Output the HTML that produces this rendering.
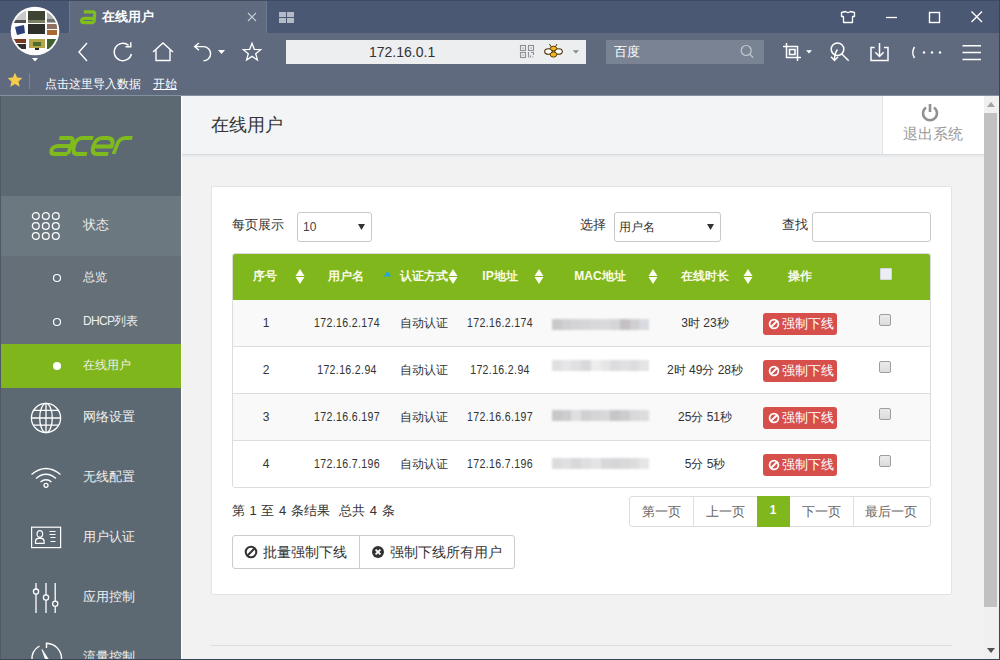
<!DOCTYPE html>
<html><head><meta charset="utf-8">
<style>
*{margin:0;padding:0;box-sizing:border-box}
html,body{width:1000px;height:660px;overflow:hidden;background:#f1f1f1;font-family:"Liberation Sans",sans-serif}
.a{position:absolute}
#tabbar{left:0;top:0;width:1000px;height:33px;background:#4b5873}
#tabbar .topline{left:0;top:0;width:1000px;height:1px;background:#3f4a60}
#tab{left:69px;top:1px;width:198px;height:32px;background:#5f6a7e;border-left:1px solid #6f7a8e;border-right:1px solid #6f7a8e}
#toolbar{left:0;top:33px;width:1000px;height:63px;background:#5f6a7e}
#addr{left:286px;top:40px;width:300px;height:24px;background:#eceef0}
#search{left:606px;top:40px;width:158px;height:24px;background:#7a8393}
.t{white-space:nowrap;line-height:1}
.c{transform:translateX(-50%)}
#side{left:0;top:96px;width:181px;height:564px;background:#5d6972}
#content{left:181px;top:96px;width:803px;height:564px;background:#f2f2f2}
#hdr{left:181px;top:96px;width:803px;height:59px;background:#f3f4f6;border-bottom:1px solid #dadbdd;box-shadow:0 1px 0 #e8e9eb,0 2px 0 #eaebed,0 3px 0 #eff0f1}
#logout{left:882px;top:96px;width:102px;height:58px;background:#fff;border-left:1px solid #e2e3e5}
#panel{left:211px;top:186px;width:741px;height:409px;background:#fff;border:1px solid #e3e3e3;border-radius:2px}
#scroll{left:984px;top:96px;width:15px;height:563px;background:#f0f0f0}
#thumb{left:984px;top:113px;width:13px;height:494px;background:#c1c1c1}
#rborder{left:999px;top:0;width:1px;height:660px;background:#3b4457}
#bborder{left:0;top:659px;width:1000px;height:1px;background:#3b4457}
</style></head><body>
<div class="a" id="tabbar"><div class="a topline"></div></div>
<div class="a" id="tab"></div>
<div class="a" id="toolbar"></div>
<div class="a" id="addr"></div>
<div class="a" id="search"></div>

<!-- avatar -->
<svg class="a" style="left:9px;top:6px" width="54" height="60" viewBox="0 0 54 60">
<circle cx="26" cy="25" r="24.3" fill="#fdfdfd"/>
<clipPath id="cc"><circle cx="26" cy="25" r="22.5"/></clipPath>
<g clip-path="url(#cc)">
<rect x="5" y="5" width="12" height="12" fill="#c9c9c9"/><rect x="5" y="14" width="12" height="3" fill="#505050"/>
<rect x="19" y="5" width="17" height="12" fill="#3d4433"/><rect x="19" y="14" width="17" height="3" fill="#7a8060"/>
<rect x="38" y="5" width="10" height="12" fill="#b0b0b0"/><rect x="38" y="13" width="10" height="3" fill="#707070"/>
<path d="M6 21 L15 19 L16 27 L8 29 Z" fill="#2c3f78"/>
<rect x="19" y="18" width="17" height="10" fill="#2e2e2a"/>
<rect x="38" y="18" width="10" height="5" fill="#8c7060"/><rect x="38" y="24" width="10" height="5" fill="#a86a30"/>
<rect x="5" y="33" width="12" height="4" fill="#7a3a20"/><rect x="8" y="38" width="9" height="5" fill="#303030"/>
<rect x="20" y="33" width="16" height="9" fill="#b4a548"/><rect x="24" y="36" width="8" height="4" fill="#4d6a2f"/><rect x="26" y="42" width="4" height="2" fill="#222"/>
<rect x="38" y="33" width="10" height="10" fill="#41602f"/>
</g>
<path d="M23 52 L29 52 L26 55.5 Z" fill="#fff"/>
</svg>
<!-- tab icon & title -->
<svg class="a" style="left:78px;top:8px" width="20" height="18" viewBox="0 0 20 18"><g fill="none" stroke="#80c01c" stroke-width="3.1"><path d="M5.8 3.9 H14.6 Q17 3.9 16.7 6.6 L15.9 14.6"/><path d="M16.2 10.4 H7.2 Q3.7 10.4 3.5 12.8 Q3.4 14.6 6 14.6 H15.9"/></g></svg>
<div class="a t" style="left:102px;top:10px;font-size:13px;font-weight:bold;color:#fff">在线用户</div>
<svg class="a" style="left:247px;top:12px" width="10" height="10" viewBox="0 0 10 10"><path d="M1 1L9 9M9 1L1 9" stroke="#c5cad3" stroke-width="1.2"/></svg>
<svg class="a" style="left:279px;top:12px" width="16" height="12" viewBox="0 0 16 12"><rect x="0" y="0" width="7" height="5" fill="#b4bbc6"/><rect x="8" y="0" width="7" height="5" fill="#b4bbc6"/><rect x="0" y="6" width="7" height="5" fill="#b4bbc6"/><rect x="8" y="6" width="7" height="5" fill="#b4bbc6"/></svg>
<!-- window controls -->
<svg class="a" style="left:836px;top:6px" width="160" height="24" viewBox="836 6 160 24" fill="none" stroke="#fff" stroke-width="1.3">
<path d="M845.5 11.5 Q848 13.5 850.5 11.5 L854.5 12.5 L854.5 16.5 L852.5 16.5 L852.5 22.5 L843.5 22.5 L843.5 16.5 L841.5 16.5 L841.5 12.5 Z" stroke-linejoin="round"/>
<path d="M886 17.5 H897"/>
<rect x="929.5" y="12.5" width="10" height="10" stroke-width="1.4"/>
<path d="M971.5 11.5 L982 22 M982 11.5 L971.5 22" stroke-width="1.4"/>
</svg>
<!-- nav icons -->
<svg class="a" style="left:74px;top:40px" width="200" height="26" viewBox="0 0 200 26">
<path d="M13 3 L5 12 L13 21" fill="none" stroke="#fff" stroke-width="1.4"/>
<path d="M54.6 5.4 A8.7 8.7 0 1 0 57.4 14" fill="none" stroke="#fff" stroke-width="1.4"/>
<path d="M51.5 6.8 H56.8 V2.2" fill="none" stroke="#fff" stroke-width="1.4"/>
<path d="M79 12 L89 3 L99 12 M82 10 L82 20.5 L96 20.5 L96 10" fill="none" stroke="#fff" stroke-width="1.4"/>
<path d="M125 3 L120.6 6.6 L125 10.2 M120.8 6.6 H129.5 A7 7 0 0 1 129.5 20.8" fill="none" stroke="#fff" stroke-width="1.4"/>
<path d="M144 10 L151 10 L147.5 14 Z" fill="#fff"/>
<path d="M178.00 3.30 L180.29 9.34 L186.75 9.66 L181.71 13.71 L183.41 19.94 L178.00 16.40 L172.59 19.94 L174.29 13.71 L169.25 9.66 L175.71 9.34 Z" fill="none" stroke="#fff" stroke-width="1.3" stroke-linejoin="miter"/>
</svg>
<!-- address -->
<div class="a t" style="left:369px;top:45px;font-size:14px;color:#333">172.16.0.1</div>
<svg class="a" style="left:510px;top:38px" width="80" height="28" viewBox="510 38 80 28">
<g fill="none" stroke="#8d9197" stroke-width="1.1">
<rect x="520.5" y="45.5" width="5" height="5"/><rect x="528.5" y="45.5" width="5" height="5"/><rect x="520.5" y="52.5" width="5" height="5"/>
<path d="M528.5 52 V57.5 M531 52.5 H533.5 V55 M530.5 55.5 V57.5 M532.5 57 H533.5"/>
</g>
<g fill="#8d9197"><rect x="522.5" y="47.5" width="1.2" height="1.2"/><rect x="530.5" y="47.5" width="1.2" height="1.2"/><rect x="522.5" y="54.5" width="1.2" height="1.2"/></g>
<path d="M549.5 44 L551.5 47.5 M557 44 L555 47.5" stroke="#5a3a00" stroke-width="1"/>
<ellipse cx="548.5" cy="51.5" rx="3.8" ry="2.8" fill="#fff" stroke="#4a3000" stroke-width="1.1"/>
<ellipse cx="558.5" cy="51.5" rx="3.8" ry="2.8" fill="#fff" stroke="#4a3000" stroke-width="1.1"/>
<ellipse cx="553.5" cy="48.5" rx="3.2" ry="2.3" fill="#f5b51c" stroke="#4a3000" stroke-width="0.9"/>
<ellipse cx="553.5" cy="54.5" rx="3.3" ry="2.6" fill="#f5b51c" stroke="#4a3000" stroke-width="0.9"/>
<path d="M572.8 50.2 H579 L575.9 53.4 Z" fill="#888"/>
</svg>
<!-- search -->
<div class="a t" style="left:614px;top:45px;font-size:13px;color:#fff">百度</div>
<svg class="a" style="left:739px;top:43px" width="17" height="17" viewBox="0 0 17 17"><circle cx="7.2" cy="7.5" r="5" fill="none" stroke="#c3c8d0" stroke-width="1.2"/><path d="M10.8 11.1L14 14.5" stroke="#c3c8d0" stroke-width="1.3"/></svg>
<!-- right tools -->
<svg class="a" style="left:770px;top:36px" width="220" height="30" viewBox="770 36 220 30" fill="none" stroke="#fff" stroke-width="1.5">
<path d="M783 46.5 H797.5 V61 M786.5 43 V57.5 H801"/>
<rect x="789.5" y="49.5" width="5.5" height="5" stroke-width="1.6"/>
<path d="M806 50.3 H812 L809 53.5 Z" fill="#fff" stroke="none"/>
<circle cx="837.5" cy="49.2" r="6.3"/>
<path d="M841.8 54 L848.7 60.7"/>
<path d="M837.5 49.5 Q834.5 53 834.5 60"/>
<path d="M831 56.8 L834.5 60.5 L838 56.8"/>
<path d="M874.6 47.4 H871 V60.4 H888 V47.4 H884"/>
<path d="M879.5 43 V56.5 M875.3 52.3 L879.5 56.5 L883.7 52.3"/>
<path d="M914.5 47 Q911 52.5 914.5 58"/>
<circle cx="924" cy="52.5" r="1.2" fill="#fff" stroke="none"/><circle cx="932" cy="52.5" r="1.2" fill="#fff" stroke="none"/><circle cx="940" cy="52.5" r="1.2" fill="#fff" stroke="none"/>
<path d="M962.5 45.8 H981 M962.5 52.6 H981 M962.5 59.5 H981"/>
</svg>
<!-- bookmarks -->
<svg class="a" style="left:7px;top:72px" width="16" height="16" viewBox="0 0 16 16"><path d="M8 0.8 L10.2 5.6 L15.4 6 L11.5 9.5 L12.7 14.8 L8 12 L3.3 14.8 L4.5 9.5 L0.6 6 L5.8 5.6 Z" fill="#f6ca4a"/></svg>
<div class="a" style="left:29px;top:73px;width:1px;height:16px;background:#7c8698"></div>
<div class="a t" style="left:45px;top:78px;font-size:12px;color:#fff">点击这里导入数据</div>
<div class="a t" style="left:153px;top:78px;font-size:12px;color:#fff;text-decoration:underline">开始</div>
<div class="a" style="left:0;top:95px;width:1000px;height:1px;background:#8590a0"></div>


<div class="a" id="side"></div>
<div class="a" style="left:0;top:96px;width:1px;height:564px;background:#4f5a66"></div>
<!-- acer logo -->
<svg class="a" style="left:49px;top:134px" width="85" height="24" viewBox="0 0 88 24" preserveAspectRatio="none">
<g transform="translate(2,2) translate(0,10) skewX(-12) translate(0,-10)" fill="none" stroke="#80bb1d" stroke-width="4" stroke-linecap="butt" stroke-linejoin="round">
<path d="M7 2 H18 Q22 2 21.3 6 L19.3 18"/>
<path d="M19.5 10 H8 Q1.5 10 1.5 14.5 Q1.5 18 6 18 H19"/>
<path d="M42 2 H31 Q25 2 24 9 Q23 18 29 18 H39"/>
<path d="M45.5 10.5 H63 Q64.5 2 56 2 H52 Q45 2 44 9.5 Q43 18 49.5 18 H61"/>
<path d="M66.5 18 L68.3 8 Q69.3 2 76 2 H82.5"/>
</g></svg>
<div class="a" style="left:1px;top:196px;width:180px;height:60px;background:#6c787f"></div>
<div class="a" style="left:1px;top:256px;width:180px;height:88px;background:#646f77"></div>
<div class="a" style="left:1px;top:344px;width:180px;height:44px;background:#7fb61b"></div>
<svg class="a" style="left:30px;top:210px" width="32" height="32" viewBox="0 0 32 32" fill="none" stroke="#fff" stroke-width="1.3"><circle cx="5.8" cy="6" r="3.4"/><circle cx="15.8" cy="6" r="3.4"/><circle cx="25.8" cy="6" r="3.4"/><circle cx="5.8" cy="16" r="3.4"/><circle cx="15.8" cy="16" r="3.4"/><circle cx="25.8" cy="16" r="3.4"/><circle cx="5.8" cy="26" r="3.4"/><circle cx="15.8" cy="26" r="3.4"/><circle cx="25.8" cy="26" r="3.4"/></svg>
<div class="a t" style="left:83px;top:218px;font-size:13px;color:#eef0f1">状态</div>
<svg class="a" style="left:52px;top:273px" width="10" height="10"><circle cx="5" cy="5" r="3.5" fill="none" stroke="#fff" stroke-width="1.2"/></svg>
<div class="a t" style="left:83px;top:271px;font-size:12px;color:#eef0f1">总览</div>
<svg class="a" style="left:52px;top:317px" width="10" height="10"><circle cx="5" cy="5" r="3.5" fill="none" stroke="#fff" stroke-width="1.2"/></svg>
<div class="a t" style="left:83px;top:315px;font-size:12px;color:#eef0f1"><span style="letter-spacing:-.7px">DHCP</span>列表</div>
<svg class="a" style="left:52px;top:361px" width="10" height="10"><circle cx="5" cy="5" r="4" fill="#fff"/></svg>
<div class="a t" style="left:83px;top:359px;font-size:12px;color:#eef0f1">在线用户</div>
<!-- globe -->
<svg class="a" style="left:29px;top:401px" width="34" height="34" viewBox="0 0 34 34" fill="none" stroke="#fff" stroke-width="1.3">
<circle cx="17" cy="17" r="14.6"/><ellipse cx="17" cy="17" rx="6.3" ry="14.6"/><path d="M17 2.4v29.2M2.4 17h29.2M4.6 9.3h24.8M4.6 24.2h24.8"/></svg>
<div class="a t" style="left:83px;top:410px;font-size:13px;color:#eef0f1">网络设置</div>
<!-- wifi -->
<svg class="a" style="left:29px;top:466px" width="34" height="24" viewBox="0 0 34 24" fill="none" stroke="#fff" stroke-width="1.3">
<path d="M2.5 8.5 Q17 -3.5 31.5 8.5"/><path d="M7 12.5 Q17 4 27 12.5"/><path d="M11.5 16 Q17 11.5 22.5 16"/><circle cx="17" cy="19.3" r="2"/></svg>
<div class="a t" style="left:83px;top:470px;font-size:13px;color:#eef0f1">无线配置</div>
<!-- user card -->
<svg class="a" style="left:30px;top:526px" width="32" height="24" viewBox="0 0 32 24" fill="none" stroke="#fff" stroke-width="1.2">
<rect x="1.6" y="1.2" width="29" height="20.4"/><ellipse cx="9.8" cy="8" rx="2.8" ry="3.4"/><path d="M5.5 17.3 V15.3 Q5.5 12.6 8.3 12.4 H11.3 Q14.1 12.6 14.1 15.3 V17.3 Z"/><path d="M19.5 5.5h6M19.5 8.5h6M20.5 11.5h5M20.5 15.5h5"/></svg>
<div class="a t" style="left:83px;top:530px;font-size:13px;color:#eef0f1">用户认证</div>
<!-- sliders -->
<svg class="a" style="left:31px;top:580px" width="30" height="36" viewBox="0 0 30 36" fill="none" stroke="#fff" stroke-width="1.3">
<path d="M5 3v30M15 3v30M24.2 3v30"/><circle cx="5" cy="11.6" r="2.6" fill="#5d6972"/><circle cx="15" cy="17.5" r="2.6" fill="#5d6972"/><circle cx="24.2" cy="23.7" r="2.6" fill="#5d6972"/></svg>
<div class="a t" style="left:83px;top:590px;font-size:13px;color:#eef0f1">应用控制</div>
<!-- gauge -->
<svg class="a" style="left:29px;top:641px" width="34" height="20" viewBox="0 0 34 20" fill="none" stroke="#fff" stroke-width="1.4">
<path d="M3 19 A15 15 0 0 1 10.5 5"/><path d="M17.5 7 V2.2 A15.5 15.5 0 0 1 32.5 19"/><path d="M13 8.5 L19.5 18.5 L16.5 18.5 Z" fill="#fff" stroke-width="0.8"/></svg>
<div class="a t" style="left:83px;top:650px;font-size:13px;color:#eef0f1">流量控制</div>

<div class="a" id="content"></div>
<div class="a" id="hdr"></div>
<div class="a" id="logout"></div>

<div class="a" id="panel"></div>
<div class="a" style="left:181px;top:96px;width:1px;height:564px;background:#fff"></div>
<div class="a t" style="left:211px;top:116px;font-size:18px;color:#333">在线用户</div>
<svg class="a" style="left:921px;top:103px" width="18" height="19" viewBox="0 0 18 19" fill="none" stroke="#909090" stroke-width="2.6">
<path d="M5 4.5 A7 7 0 1 0 13 4.5"/><path d="M9 1v8"/></svg>
<div class="a t" style="left:903px;top:126px;font-size:15px;color:#999">退出系统</div>
<!-- controls -->
<div class="a t" style="left:232px;top:218px;font-size:13px;color:#333">每页展示</div>
<div class="a" style="left:297px;top:212px;width:75px;height:30px;border:1px solid #c9c9c9;border-radius:3px;background:#fff"></div>
<div class="a t" style="left:303px;top:221px;font-size:12px;color:#444">10</div>
<svg class="a" style="left:358px;top:224px" width="7" height="6"><path d="M0 0h7l-3.5 6z" fill="#333"/></svg>
<div class="a t" style="left:580px;top:218px;font-size:13px;color:#333">选择</div>
<div class="a" style="left:614px;top:212px;width:107px;height:30px;border:1px solid #c9c9c9;border-radius:3px;background:#fff"></div>
<div class="a t" style="left:619px;top:221px;font-size:12px;color:#333">用户名</div>
<svg class="a" style="left:707px;top:224px" width="7" height="6"><path d="M0 0h7l-3.5 6z" fill="#333"/></svg>
<div class="a t" style="left:782px;top:218px;font-size:13px;color:#333">查找</div>
<div class="a" style="left:812px;top:212px;width:119px;height:30px;border:1px solid #c9c9c9;border-radius:3px;background:#fff"></div>
<!-- table -->
<div class="a" style="left:232px;top:253px;width:699px;height:235px;border:1px solid #dcdcdc;border-radius:3px;background:#fff;overflow:hidden">
<div class="a" style="left:0;top:0;width:699px;height:46px;background:#80b71d"></div>
<div class="a" style="left:0;top:46px;width:699px;height:47px;background:#f9f9f9;border-bottom:1px solid #dedede"></div>
<div class="a" style="left:0;top:93px;width:699px;height:47px;background:#fff;border-bottom:1px solid #dedede"></div>
<div class="a" style="left:0;top:140px;width:699px;height:47px;background:#f9f9f9;border-bottom:1px solid #dedede"></div>
<div class="a" style="left:0;top:187px;width:699px;height:47px;background:#fff"></div>
</div>

<div class="a" id="scroll"></div>
<div class="a" id="thumb"></div>
<div class="a" id="rborder"></div>
<div class="a" id="bborder"></div>
<!-- table content -->
<div class="a" style="left:552px;top:319px;width:97px;height:11px;background:linear-gradient(90deg,#c9c9cb 0% 10%,#d0d0d2 10% 20%,#d4d4d6 20% 30%,#d6d6d8 30% 40%,#d9d9db 40% 50%,#dadadc 50% 60%,#d5d5d7 60% 70%,#c4c0c6 70% 80%,#cfcfd1 80% 90%,#d8dadf 90% 100%);filter:blur(1px)"></div>
<div class="a" style="left:552px;top:360px;width:97px;height:11px;background:linear-gradient(90deg,#e0e0e2 0% 10%,#e6e6e8 10% 20%,#e0e0e2 20% 30%,#d8d8da 30% 40%,#ededed 40% 50%,#e6e6e8 50% 60%,#dcdcde 60% 70%,#e0e0e2 70% 80%,#dcdcde 80% 90%,#e4e4e4 90% 100%);filter:blur(1px)"></div>
<div class="a" style="left:552px;top:410px;width:97px;height:11px;background:linear-gradient(90deg,#c8c8ca 0% 10%,#cdcdcf 10% 20%,#dfdfe1 20% 30%,#d0d0d2 30% 40%,#d5d5d7 40% 50%,#d8d8da 50% 60%,#c6c6c8 60% 70%,#cdcdcf 70% 80%,#d9d9db 80% 90%,#dcdcdc 90% 100%);filter:blur(1px)"></div>
<div class="a" style="left:552px;top:458px;width:97px;height:11px;background:linear-gradient(90deg,#dcdcde 0% 10%,#e0e0e2 10% 20%,#d8d8da 20% 30%,#dfdfe1 30% 40%,#e4e4e6 40% 50%,#d8d8da 50% 60%,#d6d6d8 60% 70%,#d9d9db 70% 80%,#dcdcde 80% 90%,#e5e5e5 90% 100%);filter:blur(1px)"></div>
<div class="a t c" style="left:265px;top:270px;font-size:12px;font-weight:bold;color:#fbfbea">序号</div>
<div class="a t c" style="left:346px;top:270px;font-size:12px;font-weight:bold;color:#fbfbea">用户名</div>
<div class="a t c" style="left:424px;top:270px;font-size:12px;font-weight:bold;color:#fbfbea">认证方式</div>
<div class="a t c" style="left:500px;top:270px;font-size:12px;font-weight:bold;color:#fbfbea">IP地址</div>
<div class="a t c" style="left:600px;top:270px;font-size:12px;font-weight:bold;color:#fbfbea">MAC地址</div>
<div class="a t c" style="left:705px;top:270px;font-size:12px;font-weight:bold;color:#fbfbea">在线时长</div>
<div class="a t c" style="left:800px;top:270px;font-size:12px;font-weight:bold;color:#fbfbea">操作</div>
<svg class="a" style="left:295px;top:269px" width="10" height="16" viewBox="0 0 10 16"><path d="M5 0L9.5 7H0.5Z M5 15L9.5 8H0.5Z" fill="#fbfdf0"/></svg>
<svg class="a" style="left:448px;top:269px" width="10" height="16" viewBox="0 0 10 16"><path d="M5 0L9.5 7H0.5Z M5 15L9.5 8H0.5Z" fill="#fbfdf0"/></svg>
<svg class="a" style="left:534px;top:269px" width="10" height="16" viewBox="0 0 10 16"><path d="M5 0L9.5 7H0.5Z M5 15L9.5 8H0.5Z" fill="#fbfdf0"/></svg>
<svg class="a" style="left:648px;top:269px" width="10" height="16" viewBox="0 0 10 16"><path d="M5 0L9.5 7H0.5Z M5 15L9.5 8H0.5Z" fill="#fbfdf0"/></svg>
<svg class="a" style="left:743px;top:269px" width="10" height="16" viewBox="0 0 10 16"><path d="M5 0L9.5 7H0.5Z M5 15L9.5 8H0.5Z" fill="#fbfdf0"/></svg>
<svg class="a" style="left:383px;top:270px" width="9" height="7" viewBox="0 0 9 7"><path d="M4.5 1L8.3 6.5H0.7Z" fill="#2aa4d5"/></svg>
<div class="a" style="left:880px;top:268px;width:12px;height:12px;background:#eceef6;border:1px solid #d6d8e0;border-radius:1px"></div>
<div class="a t c" style="left:266px;top:317px;font-size:12px;color:#333">1</div>
<div class="a t c" style="left:347px;top:317px;font-size:12px;color:#333;letter-spacing:.4px;transform:translateX(-50%) scaleX(.88)">172.16.2.174</div>
<div class="a t c" style="left:424px;top:317px;font-size:12px;color:#333">自动认证</div>
<div class="a t c" style="left:500px;top:317px;font-size:12px;color:#333;letter-spacing:.4px;transform:translateX(-50%) scaleX(.88)">172.16.2.174</div>
<div class="a t c" style="left:705px;top:317px;font-size:12px;color:#333">3时 23秒</div>
<div class="a" style="left:763px;top:313px;width:74px;height:22px;background:#d64f4b;border-radius:3px"></div>
<svg class="a" style="left:768px;top:318px" width="12" height="12" viewBox="0 0 12 12" fill="none" stroke="#fff" stroke-width="1.8"><circle cx="6" cy="6" r="4.4"/><path d="M3 9L9 3"/></svg>
<div class="a t" style="left:782px;top:317px;font-size:13px;color:#fff">强制下线</div>
<div class="a" style="left:879px;top:314px;width:12px;height:12px;background:linear-gradient(#ebebeb,#dcdcdc);border:1px solid #9e9e9e;border-radius:2px"></div>
<div class="a t c" style="left:266px;top:364px;font-size:12px;color:#333">2</div>
<div class="a t c" style="left:347px;top:364px;font-size:12px;color:#333;letter-spacing:.4px;transform:translateX(-50%) scaleX(.88)">172.16.2.94</div>
<div class="a t c" style="left:424px;top:364px;font-size:12px;color:#333">自动认证</div>
<div class="a t c" style="left:500px;top:364px;font-size:12px;color:#333;letter-spacing:.4px;transform:translateX(-50%) scaleX(.88)">172.16.2.94</div>
<div class="a t c" style="left:705px;top:364px;font-size:12px;color:#333">2时 49分 28秒</div>
<div class="a" style="left:763px;top:360px;width:74px;height:22px;background:#d64f4b;border-radius:3px"></div>
<svg class="a" style="left:768px;top:365px" width="12" height="12" viewBox="0 0 12 12" fill="none" stroke="#fff" stroke-width="1.8"><circle cx="6" cy="6" r="4.4"/><path d="M3 9L9 3"/></svg>
<div class="a t" style="left:782px;top:364px;font-size:13px;color:#fff">强制下线</div>
<div class="a" style="left:879px;top:361px;width:12px;height:12px;background:linear-gradient(#ebebeb,#dcdcdc);border:1px solid #9e9e9e;border-radius:2px"></div>
<div class="a t c" style="left:266px;top:411px;font-size:12px;color:#333">3</div>
<div class="a t c" style="left:347px;top:411px;font-size:12px;color:#333;letter-spacing:.4px;transform:translateX(-50%) scaleX(.88)">172.16.6.197</div>
<div class="a t c" style="left:424px;top:411px;font-size:12px;color:#333">自动认证</div>
<div class="a t c" style="left:500px;top:411px;font-size:12px;color:#333;letter-spacing:.4px;transform:translateX(-50%) scaleX(.88)">172.16.6.197</div>
<div class="a t c" style="left:705px;top:411px;font-size:12px;color:#333">25分 51秒</div>
<div class="a" style="left:763px;top:407px;width:74px;height:22px;background:#d64f4b;border-radius:3px"></div>
<svg class="a" style="left:768px;top:412px" width="12" height="12" viewBox="0 0 12 12" fill="none" stroke="#fff" stroke-width="1.8"><circle cx="6" cy="6" r="4.4"/><path d="M3 9L9 3"/></svg>
<div class="a t" style="left:782px;top:411px;font-size:13px;color:#fff">强制下线</div>
<div class="a" style="left:879px;top:408px;width:12px;height:12px;background:linear-gradient(#ebebeb,#dcdcdc);border:1px solid #9e9e9e;border-radius:2px"></div>
<div class="a t c" style="left:266px;top:458px;font-size:12px;color:#333">4</div>
<div class="a t c" style="left:347px;top:458px;font-size:12px;color:#333;letter-spacing:.4px;transform:translateX(-50%) scaleX(.88)">172.16.7.196</div>
<div class="a t c" style="left:424px;top:458px;font-size:12px;color:#333">自动认证</div>
<div class="a t c" style="left:500px;top:458px;font-size:12px;color:#333;letter-spacing:.4px;transform:translateX(-50%) scaleX(.88)">172.16.7.196</div>
<div class="a t c" style="left:705px;top:458px;font-size:12px;color:#333">5分 5秒</div>
<div class="a" style="left:763px;top:454px;width:74px;height:22px;background:#d64f4b;border-radius:3px"></div>
<svg class="a" style="left:768px;top:459px" width="12" height="12" viewBox="0 0 12 12" fill="none" stroke="#fff" stroke-width="1.8"><circle cx="6" cy="6" r="4.4"/><path d="M3 9L9 3"/></svg>
<div class="a t" style="left:782px;top:458px;font-size:13px;color:#fff">强制下线</div>
<div class="a" style="left:879px;top:455px;width:12px;height:12px;background:linear-gradient(#ebebeb,#dcdcdc);border:1px solid #9e9e9e;border-radius:2px"></div>
<div class="a t" style="left:232px;top:504px;font-size:13px;color:#333;word-spacing:1px">第 1 至 4 条结果 &nbsp;总共 4 条</div>
<div class="a" style="left:629px;top:496px;width:302px;height:31px;border:1px solid #ddd;border-radius:3px;background:#fff"></div>
<div class="a" style="left:693px;top:497px;width:1px;height:29px;background:#ddd"></div>
<div class="a" style="left:757px;top:496px;width:33px;height:31px;background:#80b71d"></div>
<div class="a" style="left:853px;top:497px;width:1px;height:29px;background:#ddd"></div>
<div class="a t c" style="left:661px;top:505px;font-size:13px;color:#666">第一页</div>
<div class="a t c" style="left:725px;top:505px;font-size:13px;color:#666">上一页</div>
<div class="a t c" style="left:821px;top:505px;font-size:13px;color:#666">下一页</div>
<div class="a t c" style="left:891px;top:505px;font-size:13px;color:#666">最后一页</div>
<div class="a t c" style="left:773px;top:504px;font-size:12px;font-weight:bold;color:#fff">1</div>
<div class="a" style="left:232px;top:535px;width:283px;height:34px;border:1px solid #ccc;border-radius:3px;background:#fff"></div>
<div class="a" style="left:359px;top:536px;width:1px;height:32px;background:#ccc"></div>
<svg class="a" style="left:244px;top:545px" width="14" height="14" viewBox="0 0 14 14" fill="none" stroke="#333" stroke-width="2"><circle cx="7" cy="7" r="5.3"/><path d="M3.3 10.7L10.7 3.3"/></svg>
<div class="a t" style="left:263px;top:545px;font-size:14px;color:#333">批量强制下线</div>
<svg class="a" style="left:371px;top:545px" width="14" height="14" viewBox="0 0 14 14"><circle cx="7" cy="7" r="6" fill="#333"/><path d="M4.6 4.6L9.4 9.4M9.4 4.6L4.6 9.4" stroke="#fff" stroke-width="1.8"/></svg>
<div class="a t" style="left:390px;top:545px;font-size:14px;color:#333">强制下线所有用户</div>
<div class="a" style="left:211px;top:645px;width:741px;height:1px;background:#ddd"></div>
<svg class="a" style="left:986px;top:101px" width="10" height="7"><path d="M5 1L9 6H1Z" fill="#a3a3a3"/></svg>
<svg class="a" style="left:986px;top:647px" width="10" height="7"><path d="M1 1H9L5 6Z" fill="#505050"/></svg>
</body></html>
